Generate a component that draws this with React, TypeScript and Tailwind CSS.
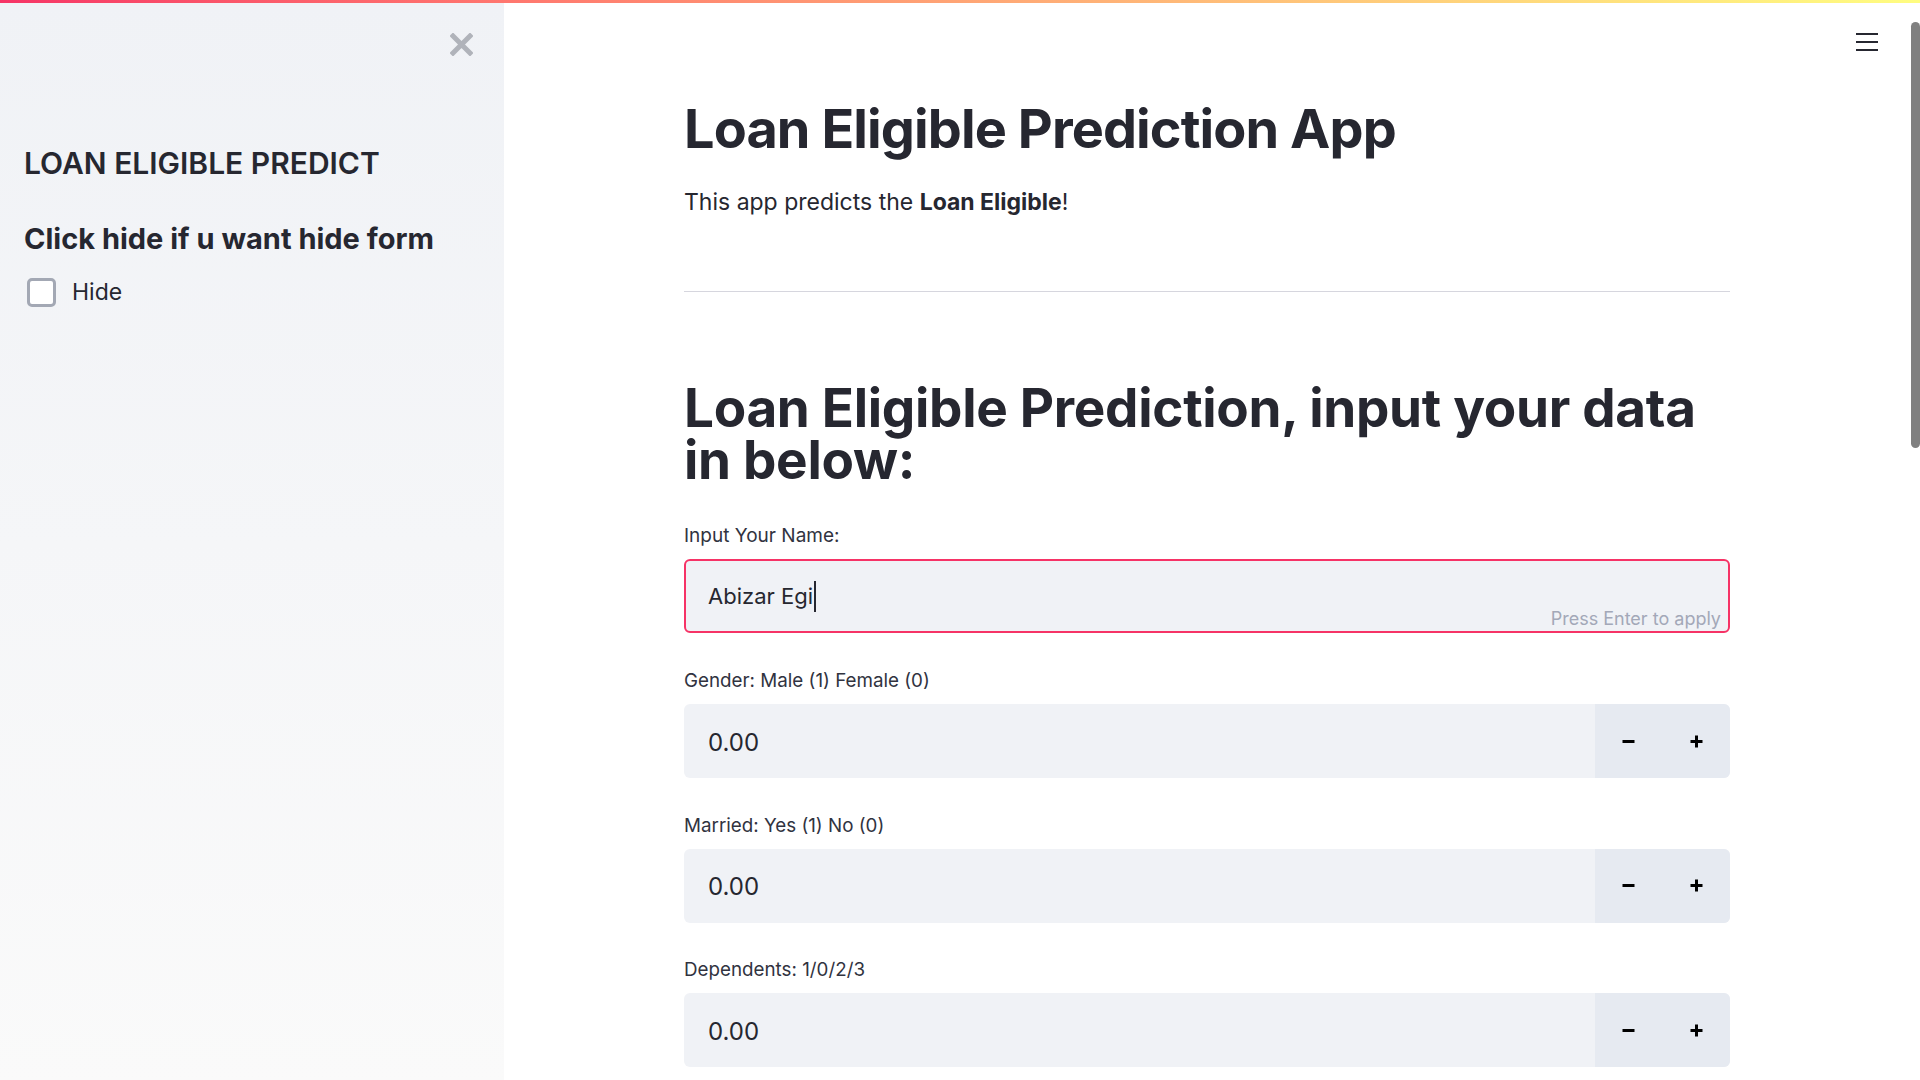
import { useState } from "react";

const font = { fontFamily: "Inter, 'Noto Sans', sans-serif" };

const CloseIcon = () => (
  <svg width="23" height="23" viewBox="0 0 23 23">
    <path d="M3 3 L20 20 M20 3 L3 20" stroke="#b0b3ba" strokeWidth="5" strokeLinecap="square" />
  </svg>
);

const Hamburger = () => (
  <svg width="24" height="20" viewBox="0 0 24 20">
    <path d="M1 2 H23 M1 10 H23 M1 18 H23" stroke="#262730" strokeWidth="2.2" />
  </svg>
);

const MinusIcon = () => (
  <svg width="13" height="13" viewBox="0 0 13 13">
    <path d="M0.5 6.5 H12.5" stroke="#000" strokeWidth="3" />
  </svg>
);

const PlusIcon = () => (
  <svg width="13" height="13" viewBox="0 0 13 13">
    <path d="M0.5 6.5 H12.5 M6.5 0.5 V12.5" stroke="#000" strokeWidth="3" />
  </svg>
);

const NumberField = ({ label, value }: { label: string; value: string }) => (
  <div className="mb-[32.5px]">
    <div className="text-[18.8px] leading-[30px] text-[#31333f] mb-2">{label}</div>
    <div className="flex h-[74px] rounded-[6px] bg-[#f0f2f6] overflow-hidden">
      <div className="flex-1 flex items-center pl-6 pt-[3px] text-[24px] text-[#262730]">{value}</div>
      <div className="w-[135px] flex bg-[#e6eaf1]">
        <button className="flex-1 flex items-center justify-center">
          <MinusIcon />
        </button>
        <button className="flex-1 flex items-center justify-center">
          <PlusIcon />
        </button>
      </div>
    </div>
  </div>
);

export default function App() {
  const [hide, setHide] = useState(false);

  return (
    <div className="relative w-[1920px] h-[1080px] overflow-hidden bg-white text-[#262730]" style={font}>
      {/* top decoration */}
      <div className="absolute top-0 left-0 right-0 h-[3px] z-10 bg-linear-to-r from-[#f63366] to-[#fffd80]" />

      <div className="flex h-full">
        {/* sidebar */}
        <aside className="w-[504px] shrink-0 h-full bg-linear-to-b from-[#f0f2f6] to-[#fafafa] px-6">
          <div className="flex justify-end pt-[33px] pr-[7px]">
            <CloseIcon />
          </div>
          <h3 className="mt-[87px] text-[30px] leading-[40px] font-semibold">LOAN ELIGIBLE PREDICT</h3>
          <h3 className="mt-[36px] text-[29px] leading-[40px] font-bold">Click hide if u want hide form</h3>
          <label className="mt-[18px] flex items-center gap-[16px] cursor-pointer">
            <span
              onClick={() => setHide(!hide)}
              className="ml-[3px] w-[29px] h-[29px] rounded-[5px] border-[3px] border-[#a3a8b4] bg-white"
            />
            <span className="text-[23px] leading-[30px]">Hide</span>
          </label>
        </aside>

        {/* main */}
        <main className="relative flex-1 h-full pr-[10px]">
          <div className="absolute top-[32px] right-[41px]">
            <Hamburger />
          </div>
          <div className="w-[1046px] mx-auto pt-[95px]">
            <h1 className="text-[54px] leading-[68px] font-bold tracking-[-0.9px]">Loan Eligible Prediction App</h1>
            <p className="mt-[21px] text-[23px] leading-[36px]">
              This app predicts the <b>Loan Eligible</b>!
            </p>
            <hr className="mt-[71px] border-0 h-px bg-[#d6d6de]" />
            <h1 className="mt-[90px] text-[53px] leading-[52px] font-bold tracking-[-0.3px]">
              Loan Eligible Prediction, input your data in below:
            </h1>

            <div className="mt-[35px] mb-[33px]">
              <div className="text-[19px] leading-[30px] text-[#31333f] mb-2">Input Your Name:</div>
              <div className="relative h-[74px] rounded-[6px] border-2 border-[#f63366] bg-[#f0f2f6] flex items-center pl-[22px]">
                <span className="text-[22px] text-[#262730]">Abizar Egi</span>
                <span className="ml-px w-[2px] h-[31px] bg-[#262730]" />
                <span className="absolute right-[7px] bottom-[3px] leading-none text-[18px] text-[#a3a8b8]">Press Enter to apply</span>
              </div>
            </div>

            <NumberField label="Gender: Male (1) Female (0)" value="0.00" />
            <NumberField label="Married: Yes (1) No (0)" value="0.00" />
            <NumberField label="Dependents: 1/0/2/3" value="0.00" />
          </div>
        </main>
      </div>

      {/* scrollbar thumb */}
      <div className="absolute right-0 top-[22px] w-[9px] h-[426px] rounded-[5px] bg-[#808080]" />
    </div>
  );
}
